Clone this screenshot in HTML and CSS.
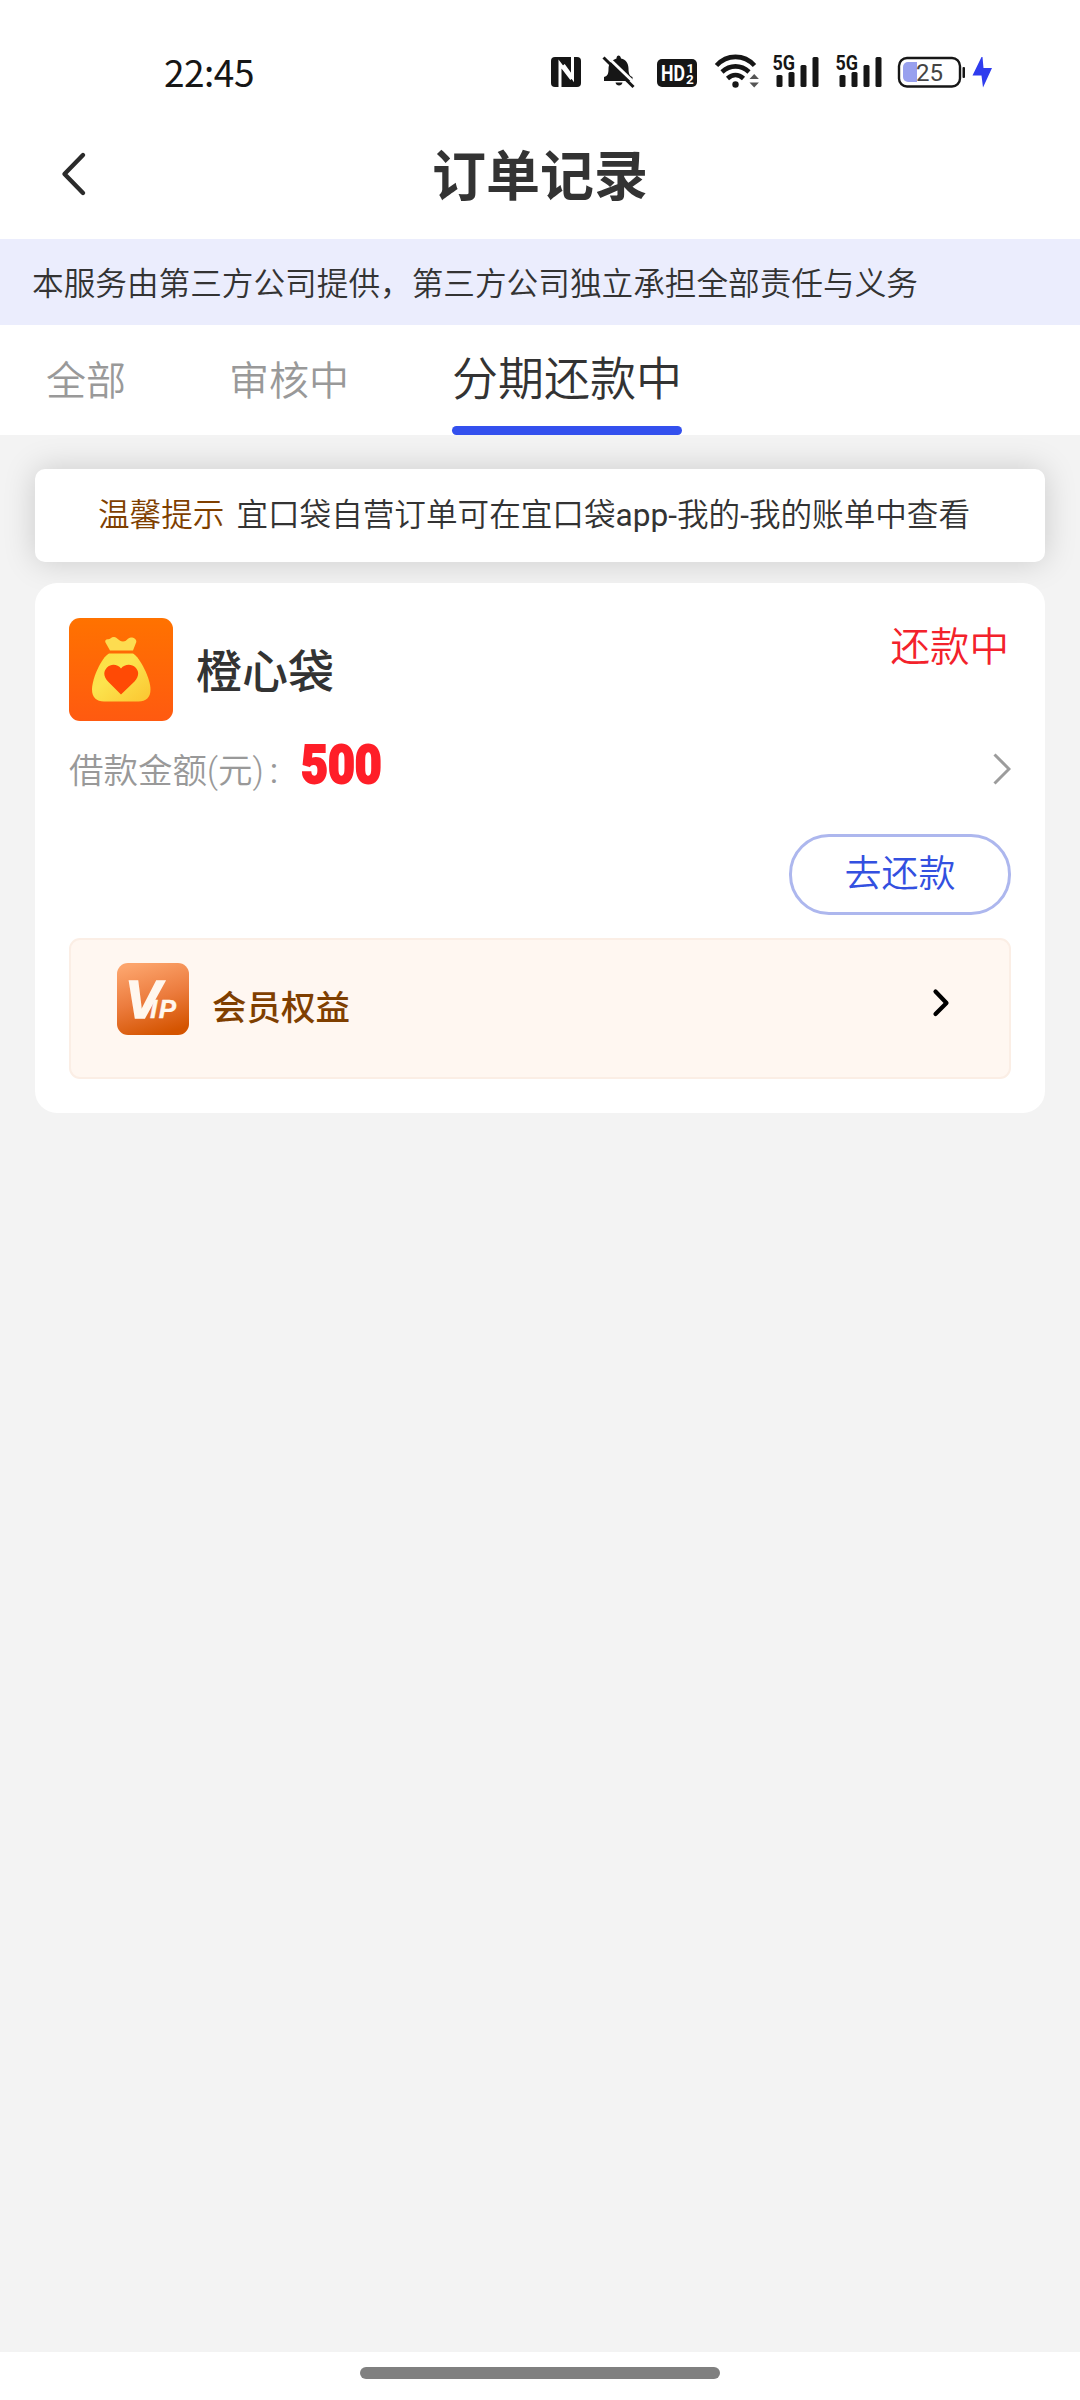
FILE: index.html
```html
<!DOCTYPE html>
<html lang="zh-CN">
<head>
<meta charset="utf-8">
<title>订单记录</title>
<link rel="stylesheet" href="styles.css">
</head>
<body>
<div class="screen">
  <header class="status-bar">
    <span class="clock">22:45</span>
    <svg class="status-icons" width="460" height="46" viewBox="540 50 460 46">
      <rect x="551" y="57" width="30" height="30" rx="4" fill="#161616"/>
      <path d="M560 87V64L571.500 79M563.500 65L572.500 77.500V57" fill="none" stroke="#fff" stroke-width="3"/>
      <path d="M604 81v-4c4-1 4.500-4 4.500-8 0-6 3.500-9 8-10.500 0-4 4-4 4.500 0 5 1 7.500 5 7.500 10 0 5 1 7.500 4 8.500v4z" fill="#161616"/>
      <path d="M615.500 82.500h7c-.5 4-6.500 4-7 0z" fill="#161616"/>
      <path d="M606 55.500L636 84.500" stroke="#fff" stroke-width="3"/>
      <path d="M603.500 57.500L633.500 87" stroke="#161616" stroke-width="3"/>
      <rect x="657" y="59" width="40" height="28" rx="5" fill="#161616"/>
      <text class="hd" x="661" y="80.800" textLength="24" lengthAdjust="spacingAndGlyphs">HD</text>
      <text class="hd-small" x="686.500" y="72.500">1</text>
      <text class="hd-small" x="686" y="84">2</text>
      <g fill="none" stroke="#161616" stroke-width="4.600">
        <path d="M716.500 65.500C727 54 744 54 754.500 65.500"/>
        <path d="M722 72C730 64.500 741 64.500 749 72"/>
        <path d="M727.500 78.500C732.500 74 738.500 74 743.500 78.500"/>
      </g>
      <circle cx="735.500" cy="84.500" r="3.200" fill="#161616"/>
      <path d="M749.500 79l4.700-5 4.700 5zM749.500 82.500l4.700 5 4.700-5z" fill="#555"/>
      <g id="signal">
        <text class="net" x="772.500" y="69.800" textLength="22.500" lengthAdjust="spacingAndGlyphs">5G</text>
        <g fill="#161616">
          <rect x="776.500" y="75" width="6" height="12" rx="1.500"/>
          <rect x="788.500" y="72" width="6" height="15" rx="1.500"/>
          <rect x="800.500" y="65" width="6" height="22" rx="1.500"/>
          <rect x="812.500" y="57" width="6" height="30" rx="1.500"/>
        </g>
      </g>
      <use href="#signal" x="63"/>
      <path d="M917 62h-9a5 5 0 0 0-5 5v10a5 5 0 0 0 5 5h9z" fill="#98a0ee"/>
      <rect x="899" y="58" width="61" height="28.500" rx="8" fill="none" stroke="#161616" stroke-width="2.400"/>
      <rect x="962.500" y="67" width="2.500" height="11" rx="1" fill="#161616"/>
      <text class="charge" x="916" y="81" textLength="27" lengthAdjust="spacingAndGlyphs">25</text>
      <path d="M981.500 57L972.500 75.500H981.500L983 87.500L992 68H983.500L982.500 57Z" fill="#2f3cee"/>
    </svg>
  </header>

  <nav class="nav-bar">
    <svg class="back" width="28" height="46" viewBox="0 0 28 46"><path d="M23 4L4.500 23L23 42" fill="none" stroke="#2b2b2b" stroke-width="4.400" stroke-linecap="round" stroke-linejoin="round"/></svg>
    <h1 class="title">订单记录</h1>
  </nav>

  <p class="notice">本服务由第三方公司提供，第三方公司独立承担全部责任与义务</p>

  <div class="tabs">
    <span class="tab">全部</span>
    <span class="tab">审核中</span>
    <span class="tab active">分期还款中</span>
  </div>

  <main class="content">
    <p class="tip"><span class="tip-label">温馨提示</span><span class="tip-text">宜口袋自营订单可在宜口袋<span class="latin">app-</span>我的<span class="latin">-</span>我的账单中查看</span></p>

    <section class="order">
      <div class="order-head">
        <svg class="logo" width="104" height="103" viewBox="0 0 104 103">
          <defs>
            <linearGradient id="orange" x1="0" y1="0" x2="0" y2="1"><stop offset="0" stop-color="#ff7200"/><stop offset="1" stop-color="#ff5a10"/></linearGradient>
            <linearGradient id="gold" x1="0" y1="0" x2="1" y2="1"><stop offset="0" stop-color="#fbdf40"/><stop offset=".4" stop-color="#fce44e"/><stop offset="1" stop-color="#fbc530"/></linearGradient>
          </defs>
          <rect width="104" height="103" rx="11" fill="url(#orange)"/>
          <path d="M41 32.500l-4.500-8c-1-2 .5-3.400 2.500-3.200 2 .2 3-2.300 6-2.300 3.500 0 4.500 4.500 9 4.500 4 0 4.500-4 8-4 3 0 5.800 2 5.300 4.500L64 32.500z" fill="#fddc50"/>
          <path d="M40 35.500h24c7 4 17.500 25 17.500 36 0 8-4.500 12-12 12H35c-7.500 0-12-4-12-12 0-11 9.500-32 17-36z" fill="url(#gold)"/>
          <path d="M52 76.500L39 63.500c-5-5.500-4.500-10.500-1-14 4-4 10.500-3.500 14 1 3.500-4.500 10.500-5 14.500-1 3.500 3.500 4 8.500-1 14z" fill="#ff4a05"/>
        </svg>
        <h2 class="name">橙心袋</h2>
        <span class="state">还款中</span>
      </div>
      <div class="amount-row">
        <span class="amount-label">借款金额(元)<span class="colon">:</span></span>
        <span class="amount">500</span>
        <svg class="more" width="20" height="32" viewBox="0 0 20 32"><path d="M3.500 1.500L18 16L3.500 30.500" fill="none" stroke="#9c9c9c" stroke-width="3"/></svg>
      </div>
      <div class="actions"><button class="repay">去还款</button></div>
      <div class="member">
        <svg class="vip" width="72" height="72" viewBox="0 0 72 72">
          <defs><linearGradient id="vipbg" x1=".3" y1="0" x2=".6" y2="1"><stop offset="0" stop-color="#fca46c"/><stop offset=".5" stop-color="#ec7c3e"/><stop offset="1" stop-color="#d45400"/></linearGradient></defs>
          <rect width="72" height="72" rx="11" fill="url(#vipbg)"/>
          <text class="vip-text" x="8" y="55">V<tspan class="vip-small" dx="-11">IP</tspan></text>
        </svg>
        <span class="member-text">会员权益</span>
        <svg class="go" width="20" height="32" viewBox="0 0 20 32"><path d="M4.500 4.500L15.500 16L4.500 27" fill="none" stroke="#000" stroke-width="4.200" stroke-linecap="round" stroke-linejoin="round"/></svg>
      </div>
    </section>
  </main>

  <footer class="home-bar"><span class="home-pill"></span></footer>
</div>
</body>
</html>
```
FILE: styles.css
```css
* { box-sizing: border-box; }
body, h1, h2, p { margin: 0; }
body {
  background: #fff;
  color: #333;
  font-family: "Noto Sans CJK SC", sans-serif;
  font-weight: 350;
}
.screen {
  display: flex;
  flex-direction: column;
  width: 1080px;
  height: 2400px;
  overflow: hidden;
}

/* status bar */
.status-bar {
  display: flex;
  align-items: flex-start;
  justify-content: space-between;
  height: 108px;
  padding: 50px 80px 0 164px;
}
.clock {
  font-size: 37px;
  line-height: 42px;
  font-weight: 400;
  letter-spacing: -0.5px;
  color: #161616;
}
.hd, .hd-small, .net, .charge { font-family: Roboto, sans-serif; }
.hd { font-size: 22px; font-weight: 700; fill: #fff; }
.hd-small { font-size: 13.5px; font-weight: 700; fill: #fff; }
.net { font-size: 20.5px; font-weight: 700; fill: #161616; }
.charge { font-size: 24px; font-weight: 400; fill: #444; }

/* navigation */
.nav-bar {
  display: grid;
  grid-template-columns: 100px 1fr 100px;
  align-items: center;
  height: 131px;
  padding: 0 60px;
}
.back { margin-top: 1px; }
.title {
  margin-bottom: 2px;
  text-align: center;
  font-size: 54px;
  line-height: 80px;
  font-weight: 700;
}

.notice {
  height: 86px;
  padding-left: 32px;
  background: #ebedfd;
  font-size: 31.65px;
  line-height: 84px;
  white-space: nowrap;
}

/* tabs */
.tabs {
  display: flex;
  gap: 103px;
  height: 110px;
  padding-left: 46px;
}
.tab {
  height: 110px;
  font-size: 40px;
  line-height: 106px;
  color: #999;
}
.tab.active {
  display: flex;
  flex-direction: column;
  font-size: 46px;
  line-height: 101px;
  color: #333;
}
.tab.active::after {
  content: "";
  height: 9px;
  border-radius: 4.5px;
  background: #3350ee;
}

/* content */
.content {
  flex: 1;
  padding: 34px 35px 0;
  background: #f3f3f3;
}
.tip {
  display: flex;
  gap: 12px;
  height: 93px;
  padding-left: 63px;
  border-radius: 10px;
  background: #fff;
  box-shadow: 0 0 32px rgba(0, 0, 0, 0.17);
  font-family: Roboto, "Noto Sans CJK SC", sans-serif;
  font-size: 31.6px;
  line-height: 93px;
  white-space: nowrap;
}
.tip-label { color: #7f3f00; }
.latin { font-weight: 400; }

.order {
  position: relative;
  height: 530px;
  margin-top: 21px;
  padding: 35px 34px 0;
  border-radius: 22px;
  background: #fff;
}
.order-head { display: flex; height: 103px; }
.logo { flex: none; }
.name {
  margin-left: 23px;
  font-size: 46px;
  line-height: 100px;
  font-weight: 500;
}
.state {
  margin: 0 2px 0 auto;
  font-size: 39.5px;
  line-height: 51px;
  color: #f3222b;
}
.amount-row {
  display: flex;
  align-items: center;
  height: 96px;
}
.amount-label {
  width: 232px;
  margin-bottom: 2px;
  font-family: Roboto, "Noto Sans CJK SC", sans-serif;
  font-size: 34.5px;
  color: #999;
  white-space: nowrap;
}
.colon { margin-left: 6px; font-weight: 400; }
.amount {
  transform: scaleX(0.86);
  transform-origin: left;
  margin-bottom: 8px;
  font-family: Roboto, sans-serif;
  font-size: 54px;
  line-height: 64px;
  font-weight: 900;
  color: #ff1e28;
  -webkit-text-stroke: 2px #ff1e28;
}
.more { margin-left: auto; }
.actions {
  display: flex;
  justify-content: flex-end;
  height: 121px;
  padding-top: 17px;
}
.repay {
  width: 222px;
  height: 81px;
  padding: 0 0 7px;
  border: 3px solid #adb7ee;
  border-radius: 40px;
  background: #fff;
  font-family: inherit;
  font-size: 37px;
  font-weight: inherit;
  line-height: 60px;
  color: #3350e0;
}
.member {
  display: flex;
  height: 141px;
  padding: 23px 58px 0 46px;
  border: 2px solid #fbeee5;
  border-radius: 11px;
  background: #fff7f1;
}
.vip-text {
  font-family: "Liberation Sans", sans-serif;
  font-size: 54px;
  font-weight: 700;
  font-style: italic;
  fill: #fff7ee;
  stroke: #fff7ee;
  stroke-width: 1.5px;
}
.vip-small {
  font-size: 26px;
  letter-spacing: 1.5px;
  stroke-width: 0.4px;
}
.member-text {
  margin-left: 23px;
  font-size: 34.5px;
  line-height: 84px;
  font-weight: 500;
  color: #7f3f00;
}
.go { margin: 24px 0 0 auto; }

.home-bar {
  display: flex;
  justify-content: center;
  height: 48px;
  padding-top: 15px;
  background: #fff;
}
.home-pill {
  width: 360px;
  height: 12px;
  border-radius: 6px;
  background: #808080;
}
```
